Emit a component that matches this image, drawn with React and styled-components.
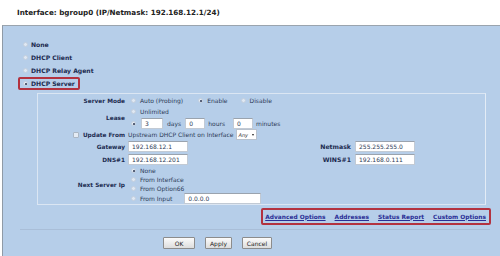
import React from "react";
import styled, { createGlobalStyle, css } from "styled-components";

const GlobalStyle = createGlobalStyle`
  html, body { margin: 0; padding: 0; background: #ffffff; }
  body { font-family: "DejaVu Sans", Verdana, sans-serif; width: 500px; height: 256px; overflow: hidden; }
  * { box-sizing: border-box; }
`;

const Header = styled.div`
  height: 25px;
  line-height: 25px;
  padding-left: 17px;
  font-size: 7.2px;
  font-weight: bold;
  color: #222;
  background: #fff;
`;

const Panel = styled.div`
  margin-left: 2px;
  height: 231px;
  border-left: 1px solid #8f9aa6;
  border-top: 1px solid #9aa4ae;
  background: #b6cee9;
  padding-top: 12px;
`;

const ModeList = styled.div`
  display: flex;
  flex-direction: column;
  align-items: flex-start;
`;

const ModeItem = styled.div`
  display: inline-flex;
  align-items: center;
  gap: 3px;
  height: 13px;
  margin-left: 15px;
  padding: 0 3px 0 3px;
  border: 2px solid transparent;
  border-radius: 2px;
  font-size: 6.1px;
  font-weight: bold;
  color: #1c2b50;
  ${(p) =>
    p.$highlight &&
    css`
      border-color: #b3323f;
    `}
`;

const Radio = styled.span`
  display: inline-block;
  flex: none;
  width: 5px;
  height: 5px;
  border-radius: 50%;
  background: #dfe8f3;
  border: 0.5px solid #c3cfdd;
  position: relative;
  ${(p) =>
    p.$checked &&
    css`
      background: #e6edf6;
      &::after {
        content: "";
        position: absolute;
        left: 1.2px;
        top: 1.2px;
        width: 2px;
        height: 2px;
        border-radius: 50%;
        background: #2a3550;
      }
    `}
`;

const ServerBox = styled.div`
  margin: 3px 0 0 34px;
  width: 449px;
  border: 1px solid #dbe6f3;
  border-right-color: #e3ecf6;
  padding-top: 1px;
`;

const FormGrid = styled.div`
  display: grid;
  grid-template-columns: 87px 1fr;
  column-gap: 3px;
`;

const Label = styled.div`
  display: flex;
  align-items: center;
  justify-content: flex-end;
  gap: 4px;
  font-size: 5.8px;
  font-weight: bold;
  color: #1c2b50;
  height: ${(p) => p.$h}px;
  white-space: nowrap;
`;

const Field = styled.div`
  display: flex;
  flex-direction: ${(p) => (p.$column ? "column" : "row")};
  align-items: ${(p) => (p.$column ? "flex-start" : "center")};
  min-height: ${(p) => p.$h || 0}px;
  font-size: 6px;
  color: #2d3b58;
  white-space: nowrap;
`;

const Line = styled.div`
  display: flex;
  align-items: center;
  height: ${(p) => p.$h}px;
`;

const Option = styled.span`
  display: inline-flex;
  align-items: center;
  gap: 4px;
  margin-left: ${(p) => p.$ml ?? 3}px;
  margin-right: ${(p) => p.$mr ?? 0}px;
`;

const TextBox = styled.span`
  display: inline-flex;
  align-items: center;
  height: 11px;
  width: ${(p) => p.$w}px;
  margin-left: ${(p) => p.$ml ?? 0}px;
  margin-right: ${(p) => p.$mr ?? 0}px;
  padding-left: 3px;
  background: #fff;
  border: 1px solid #c2cad4;
  border-top-color: #9aa3ae;
  font-size: 6px;
  color: #2d3b58;
`;

const Word = styled.span`
  margin: 0 ${(p) => p.$mr ?? 0}px 0 ${(p) => p.$ml ?? 0}px;
`;

const Check = styled.span`
  display: inline-block;
  width: 6px;
  height: 6px;
  background: #e4ebf4;
  border: 1px solid #aab6c4;
  border-radius: 1px;
`;

const Select = styled.span`
  display: inline-flex;
  align-items: center;
  justify-content: space-between;
  margin-left: 2px;
  width: 21px;
  height: 11px;
  padding: 0 2px 0 2px;
  background: #fff;
  border: 1px solid #b9c2cd;
  font-size: 5px;
  font-style: italic;
  color: #333;
`;

const Caret = styled.span`
  width: 0;
  height: 0;
  border-left: 1.5px solid transparent;
  border-right: 1.5px solid transparent;
  border-top: 2px solid #222;
`;

const RightPair = styled.span`
  display: inline-flex;
  align-items: center;
  justify-content: flex-end;
  gap: 4px;
  width: ${(p) => p.$w}px;
  font-size: 6.2px;
  font-weight: bold;
  color: #1c2b50;
`;

const LinksRow = styled.div`
  display: flex;
  justify-content: flex-end;
  padding-right: 9px;
  margin-top: 3px;
`;

const LinksBox = styled.div`
  display: flex;
  align-items: center;
  gap: 9px;
  height: 17px;
  padding: 0 3px 0 2px;
  border: 2px solid #b3323f;
  border-radius: 2px;
`;

const NavLink = styled.a`
  font-size: 5.9px;
  font-weight: bold;
  color: #2a2f96;
  text-decoration: underline;
  cursor: pointer;
`;

const Divider = styled.div`
  margin: 4px 10px 0 17px;
  height: 1px;
  background: #a9bed8;
`;

const ButtonRow = styled.div`
  display: flex;
  gap: 10px;
  padding-left: 160px;
  margin-top: 7px;
`;

const Button = styled.button`
  height: 12px;
  width: ${(p) => p.$w}px;
  padding: 0;
  font-family: "DejaVu Sans", Verdana, sans-serif;
  font-size: 6px;
  color: #222;
  background: linear-gradient(#fbfbfb, #dddddd);
  border: 1px solid #8c8c8c;
  border-radius: 1px;
`;

export default function App() {
  return (
    <>
      <GlobalStyle />
      <Header>Interface: bgroup0 (IP/Netmask: 192.168.12.1/24)</Header>
      <Panel>
        <ModeList>
          <ModeItem><Radio />None</ModeItem>
          <ModeItem><Radio />DHCP Client</ModeItem>
          <ModeItem><Radio />DHCP Relay Agent</ModeItem>
          <ModeItem $highlight><Radio $checked />DHCP Server</ModeItem>
        </ModeList>
        <ServerBox>
          <FormGrid>
            <Label $h={11}>Server Mode</Label>
            <Field $h={11}>
              <Option $ml={3} $mr={15}><Radio />Auto (Probing)</Option>
              <Option $ml={0} $mr={13}><Radio $checked />Enable</Option>
              <Option $ml={0}><Radio />Disable</Option>
            </Field>

            <Label $h={23}>Lease</Label>
            <Field $column>
              <Line $h={11}><Option><Radio />Unlimited</Option></Line>
              <Line $h={12}>
                <Option><Radio $checked /></Option>
                <TextBox $w={22} $ml={5} $mr={4}>3</TextBox>
                <Word $mr={4}>days</Word>
                <TextBox $w={20} $mr={3}>0</TextBox>
                <Word $mr={8}>hours</Word>
                <TextBox $w={20} $mr={3}>0</TextBox>
                <Word>minutes</Word>
              </Line>
            </Field>

            <Label $h={11}><Check />Update From</Label>
            <Field $h={11}>
              <Word>Upstream DHCP Client on Interface</Word>
              <Select>Any<Caret /></Select>
            </Field>

            <Label $h={13}>Gateway</Label>
            <Field $h={13}>
              <TextBox $w={60}>192.168.12.1</TextBox>
              <RightPair $w={163}>Netmask</RightPair>
              <TextBox $w={60} $ml={4}>255.255.255.0</TextBox>
            </Field>

            <Label $h={13}>DNS#1</Label>
            <Field $h={13}>
              <TextBox $w={60}>192.168.12.201</TextBox>
              <RightPair $w={163}>WINS#1</RightPair>
              <TextBox $w={60} $ml={4}>192.168.0.111</TextBox>
            </Field>

            <Label $h={38}>Next Server Ip</Label>
            <Field $column>
              <Line $h={9}><Option><Radio $checked />None</Option></Line>
              <Line $h={9}><Option><Radio />From Interface</Option></Line>
              <Line $h={9}><Option><Radio />From Option66</Option></Line>
              <Line $h={11}>
                <Option $mr={12}><Radio />From Input</Option>
                <TextBox $w={77}>0.0.0.0</TextBox>
              </Line>
            </Field>
          </FormGrid>
        </ServerBox>
        <LinksRow>
          <LinksBox>
            <NavLink>Advanced Options</NavLink>
            <NavLink>Addresses</NavLink>
            <NavLink>Status Report</NavLink>
            <NavLink>Custom Options</NavLink>
          </LinksBox>
        </LinksRow>
        <Divider />
        <ButtonRow>
          <Button $w={32}>OK</Button>
          <Button $w={27}>Apply</Button>
          <Button $w={30}>Cancel</Button>
        </ButtonRow>
      </Panel>
    </>
  );
}
